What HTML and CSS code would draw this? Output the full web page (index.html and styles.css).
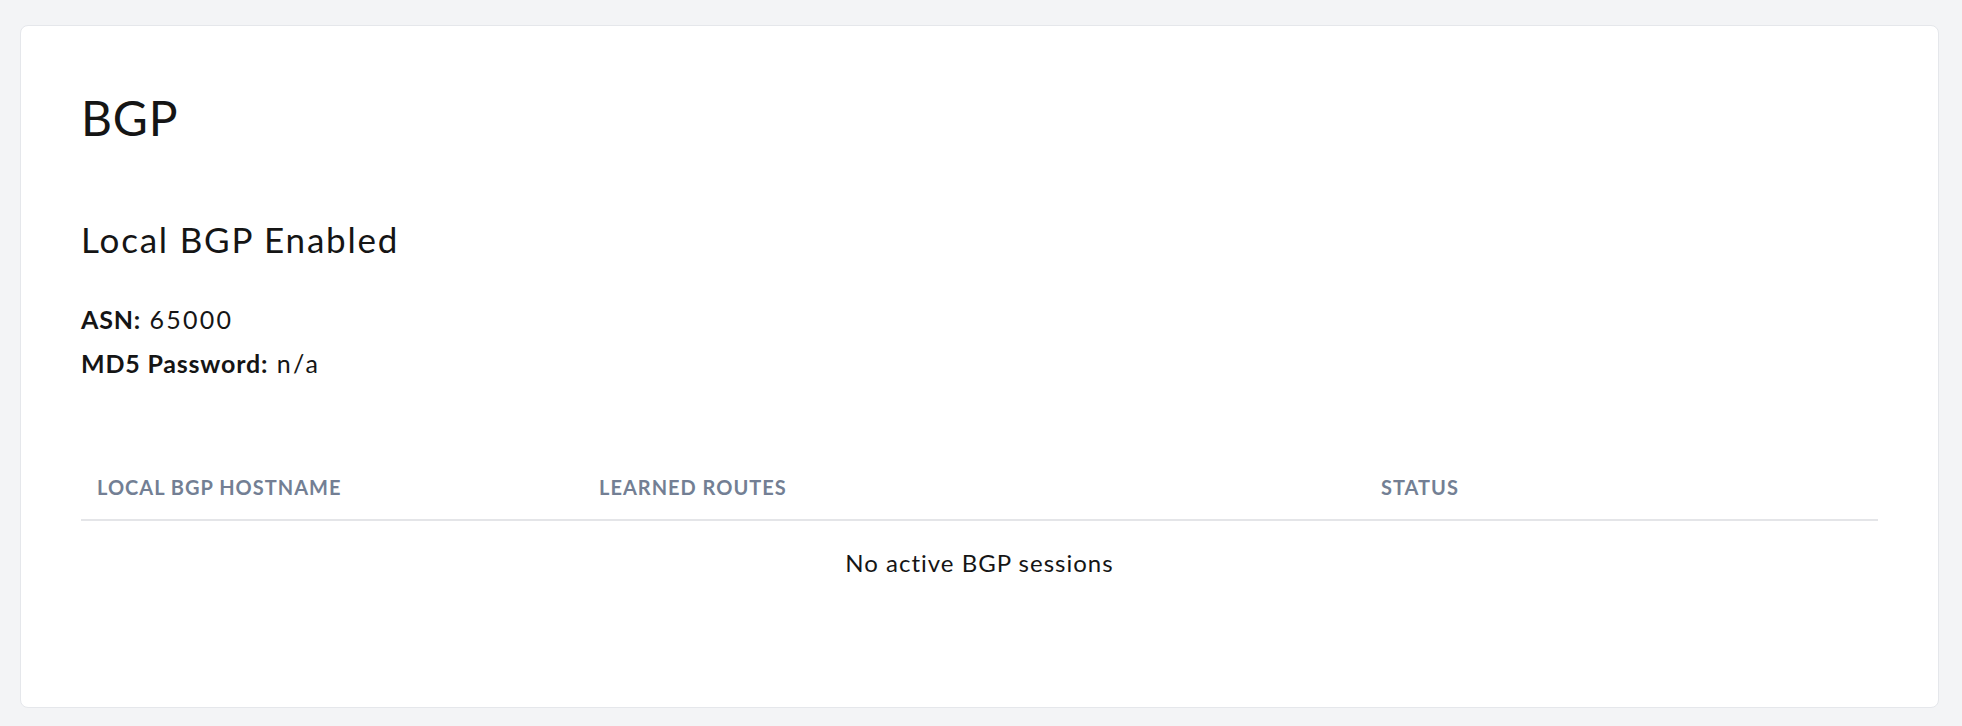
FILE: index.html
```html
<!DOCTYPE html>
<html>
<head>
<meta charset="utf-8">
<link rel="stylesheet" href="styles.css">
</head>
<body>
<div class="card">
  <h1 class="title">BGP</h1>
  <h2 class="subtitle">Local BGP Enabled</h2>
  <div class="props">
    <div class="prop"><span class="label">ASN:</span> 65000</div>
    <div class="prop"><span class="label">MD5 Password:</span> n/a</div>
  </div>
  <table class="sessions">
    <thead>
      <tr>
        <th class="col-host">Local BGP Hostname</th>
        <th class="col-routes">Learned Routes</th>
        <th class="col-status">Status</th>
      </tr>
    </thead>
    <tbody>
      <tr>
        <td class="empty" colspan="3">No active BGP sessions</td>
      </tr>
    </tbody>
  </table>
</div>
</body>
</html>
```
FILE: styles.css
```css
* { box-sizing: border-box; }
html, body { margin: 0; }
body {
  background: #f3f4f6;
  padding: 25px 23px 18px 20px;
  font-family: Lato, "Liberation Sans", sans-serif;
  color: #151515;
}
.card {
  background: #fff;
  border: 1px solid #e5e7eb;
  border-radius: 8px;
  height: 683px;
  padding: 64px 60px 60px;
}
.title {
  margin: 0;
  font-size: 48px;
  font-weight: 400;
  line-height: 56px;
  letter-spacing: 0.8px;
}
.subtitle {
  margin: 73px 0 0;
  font-size: 35px;
  font-weight: 400;
  line-height: 40px;
  letter-spacing: 1.8px;
}
.props { margin-top: 38px; }
.prop {
  font-size: 25px;
  line-height: 44px;
  letter-spacing: 2.2px;
}
.label { font-weight: 700; letter-spacing: 0.8px; }
.sessions {
  margin-top: 78px;
  width: 100%;
  border-collapse: collapse;
}
.sessions th {
  text-align: left;
  font-size: 20px;
  font-weight: 700;
  text-transform: uppercase;
  color: #737f94;
  line-height: 24px;
  letter-spacing: 1px;
  padding: 12px 16px 20px;
  border-bottom: 2px solid #e4e5e8;
}
.col-host { width: 502px; }
.col-routes { width: 782px; }
.sessions td {
  font-size: 24px;
  line-height: 24px;
  letter-spacing: 1px;
  padding: 30px 16px;
}
.empty { text-align: center; }
```
